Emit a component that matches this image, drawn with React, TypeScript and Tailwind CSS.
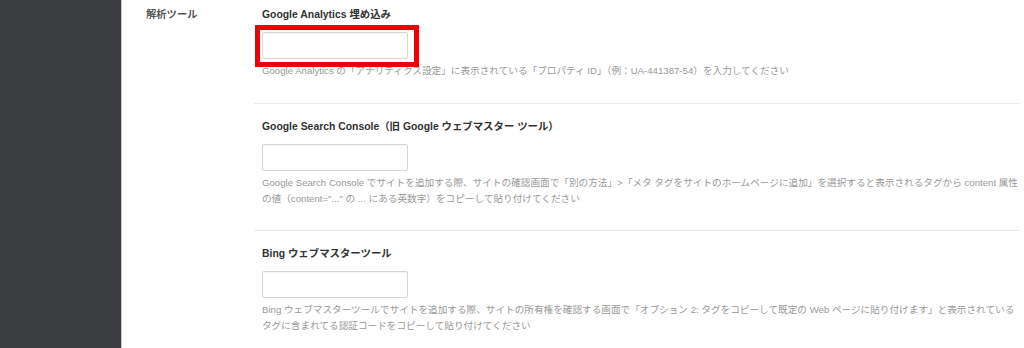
import React from "react";

const font = { fontFamily: '"Liberation Sans", "Noto Sans CJK JP", sans-serif' };

function Field({
  title,
  children,
  highlight,
  className,
}: {
  title: string;
  children: React.ReactNode;
  highlight?: boolean;
  className: string;
}) {
  return (
    <div className={`border-b border-[#ebebeb] pl-[8px] ${className}`}>
      <div className="text-[10.4px] font-bold leading-[16px] text-[#333]">{title}</div>
      <div className="relative mt-[9px] h-[27px] w-[146px]">
        <input
          type="text"
          className="block h-[27px] w-[146px] rounded-[2px] border border-[#d4d6d8] bg-white shadow-[inset_0_1px_1px_rgba(0,0,0,0.05)] outline-none"
        />
        {highlight && (
          <span className="pointer-events-none absolute left-[-7px] top-[-7px] h-[42px] w-[164px] border-[5px] border-[#ee0000]" />
        )}
      </div>
      <div className="mt-[4px] whitespace-nowrap text-[9.65px] leading-[16px] text-[#999]">{children}</div>
    </div>
  );
}

export default function App() {
  return (
    <div className="flex h-[348px] w-[1024px] overflow-hidden bg-white" style={font}>
      <div className="h-full w-[122px] shrink-0 border-r border-[#c9c9cb] bg-[#3c3d41]" />
      <div className="flex flex-1">
        <div className="w-[132px] shrink-0 pl-[24px] pt-[7px] text-[10.3px] font-bold leading-[16px] text-[#555]">
          解析ツール
        </div>
        <div className="w-[766px] shrink-0">
          <Field title="Google Analytics 埋め込み" highlight className="pt-[7px] pb-[24px]">
            Google Analytics の「アナリティクス設定」に表示されている「プロパティ ID」（例：UA-441387-54）を入力してください
          </Field>
          <Field title="Google Search Console（旧 Google ウェブマスター ツール）" className="pt-[15px] pb-[23px]">
            Google Search Console でサイトを追加する際、サイトの確認画面で「別の方法」&gt;「メタ タグをサイトのホームページに追加」を選択すると表示されるタグから content 属性
            <br />
            の値（content="..." の ... にある英数字）をコピーして貼り付けてください
          </Field>
          <Field title="Bing ウェブマスターツール" className="border-b-0 pt-[15px] pb-[24px]">
            Bing ウェブマスターツールでサイトを追加する際、サイトの所有権を確認する画面で「オプション 2: タグをコピーして既定の Web ページに貼り付けます」と表示されている
            <br />
            タグに含まれてる認証コードをコピーして貼り付けてください
          </Field>
        </div>
      </div>
    </div>
  );
}
